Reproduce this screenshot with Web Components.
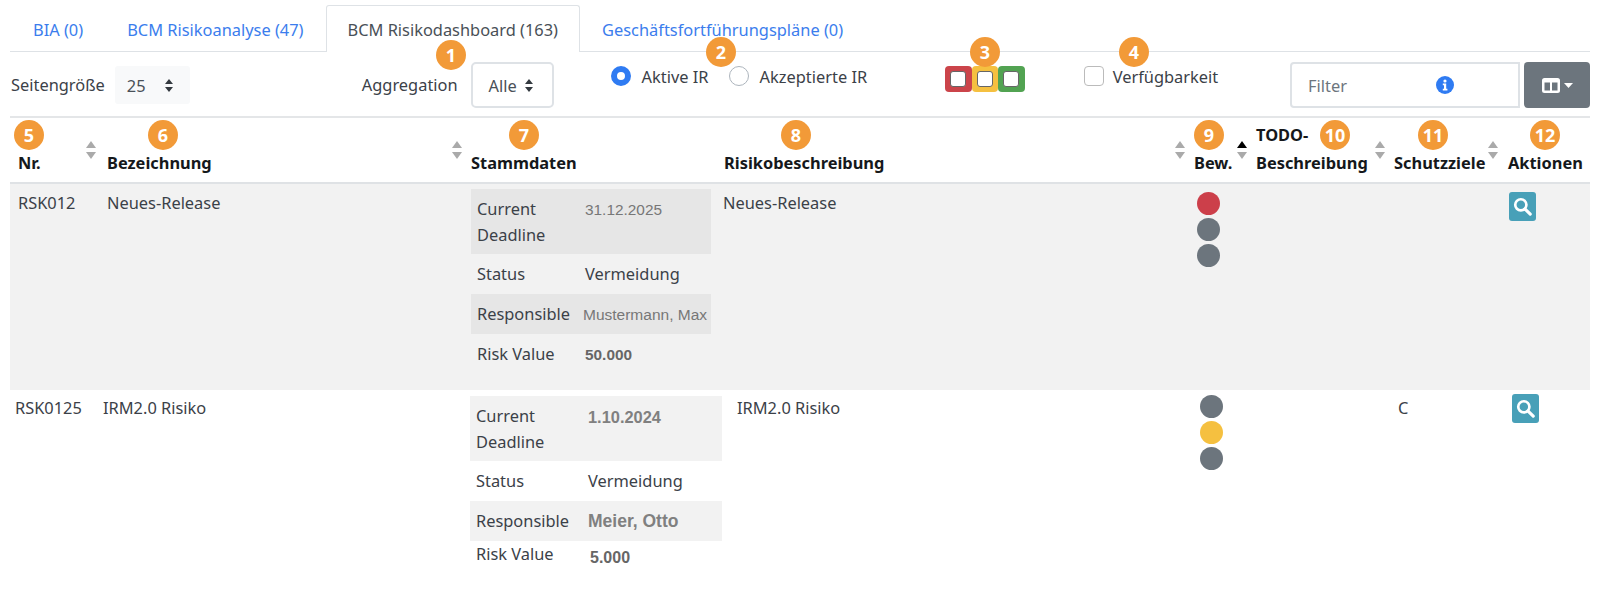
<!DOCTYPE html>
<html lang="de">
<head>
<meta charset="utf-8">
<title>BCM Risikodashboard</title>
<style>
  html, body { margin: 0; height: 596px; overflow: hidden; background: #fff; }
  body { font-family: "Noto Sans", "Open Sans", sans-serif; font-size: 16.4px; color: #3b4148; }
</style>
</head>
<body>
<risk-dashboard>
  <tab-bar>
    <tab-item>BIA (0)</tab-item>
    <tab-item>BCM Risikoanalyse (47)</tab-item>
    <tab-item active>BCM Risikodashboard (163)</tab-item>
    <tab-item>Geschäftsfortführungspläne (0)</tab-item>
  </tab-bar>
  <risk-toolbar></risk-toolbar>
  <risk-header></risk-header>
  <risk-row code="RSK012" name="Neues-Release" desc="Neues-Release" lights="r,g,g" shade style="--cols:90px 371px 252px 474px 62px 138px 112px 1fr;--h:206px;--code-top:8px;--code-left:8px;--kv-top:5px;--kv-width:240px;--desc-left:0px;--light-top:8px;--btn-top:8px">
    <kv-table slot="data" style="--bg:#e6e6e6;--lh:26px;--label-col:108px">
      <kv-row shade tall label="Current Deadline"><span class="v" style="font:15.4px 'Liberation Sans',sans-serif;color:#777;padding-top:5px;display:block">31.12.2025</span></kv-row>
      <kv-row label="Status"><span>Vermeidung</span></kv-row>
      <kv-row shade label="Responsible"><span style="font:15.5px 'Liberation Sans',sans-serif;color:#777;margin-left:-2px;white-space:nowrap">Mustermann, Max</span></kv-row>
      <kv-row label="Risk Value"><span style="font:bold 15.4px 'Liberation Sans',sans-serif;color:#666">50.000</span></kv-row>
    </kv-table>
  </risk-row>
  <risk-row code="RSK0125" name="IRM2.0 Risiko" desc="IRM2.0 Risiko" protect="C" lights="g,y,g" style="--cols:86px 374px 260px 470px 62px 136px 114px 1fr;--h:206px;--code-top:7px;--code-left:5px;--kv-top:6px;--kv-width:252px;--desc-left:7px;--light-top:5px;--btn-top:4px">
    <kv-table slot="data" style="--bg:#f2f2f2;--lh:26px;--label-col:112px">
      <kv-row shade tall label="Current Deadline"><span style="font:bold 16.4px 'Liberation Sans',sans-serif;color:#808080;padding-top:5px;display:block">1.10.2024</span></kv-row>
      <kv-row label="Status"><span>Vermeidung</span></kv-row>
      <kv-row shade label="Responsible"><span style="font:bold 17.5px 'Liberation Sans',sans-serif;color:#808080">Meier, Otto</span></kv-row>
      <kv-row short label="Risk Value"><span style="font:bold 16px 'Liberation Sans',sans-serif;color:#666;padding:8px 0 0 2px;display:block">5.000</span></kv-row>
    </kv-table>
  </risk-row>

  <step-badge slot="badges" n="1" x="451" y="55"></step-badge>
  <step-badge slot="badges" n="2" x="721" y="52"></step-badge>
  <step-badge slot="badges" n="3" x="985" y="52"></step-badge>
  <step-badge slot="badges" n="4" x="1134" y="52"></step-badge>
  <step-badge slot="badges" n="5" x="29" y="135"></step-badge>
  <step-badge slot="badges" n="6" x="163" y="135"></step-badge>
  <step-badge slot="badges" n="7" x="524" y="135"></step-badge>
  <step-badge slot="badges" n="8" x="796" y="135"></step-badge>
  <step-badge slot="badges" n="9" x="1209" y="135"></step-badge>
  <step-badge slot="badges" n="10" x="1335" y="135"></step-badge>
  <step-badge slot="badges" n="11" x="1433" y="135"></step-badge>
  <step-badge slot="badges" n="12" x="1545" y="135"></step-badge>
</risk-dashboard>

<script>
const SORT_ICON = (active) => `<svg width="12" height="20" viewBox="0 0 12 20"><path d="M6 1l5 7H1z" fill="${active ? '#000' : '#aaa'}"/><path d="M6 19l5-7H1z" fill="#aaa"/></svg>`;
const UPDOWN_ICON = `<svg width="10" height="15" viewBox="0 0 10 15"><path d="M5 1l4 5H1zM5 14l4-5H1z" fill="#343a40"/></svg>`;

const template_dashboard = document.createElement('template');
template_dashboard.innerHTML = `
<style>
  :host { display: block; position: relative; height: 596px; padding: 5px 10px 0; box-sizing: border-box; overflow: hidden; }
</style>
<slot></slot>
<slot name="badges"></slot>
`;

class RiskDashboard extends HTMLElement {
  constructor() {
    super();
    this.attachShadow({mode: 'open'});
    this.shadowRoot.appendChild(template_dashboard.content.cloneNode(true));
  }
}

class TabBar extends HTMLElement {
  constructor() {
    super();
    this.attachShadow({mode: 'open'}).innerHTML = `
      <style>
        :host { display: flex; height: 47px; border-bottom: 1px solid #dee2e6; box-sizing: border-box; padding-left: 1px; }
      </style>
      <slot></slot>`;
  }
}

class TabItem extends HTMLElement {
  constructor() {
    super();
    this.attachShadow({mode: 'open'}).innerHTML = `
      <style>
        :host { display: block; height: 47px; box-sizing: border-box; padding: 0 21px; line-height: 47px; color: #3b7ded; border: 1px solid transparent; border-bottom: 0; white-space: nowrap; }
        :host([active]) { color: #495057; background: #fff; border-color: #dee2e6; border-bottom: 0; border-radius: 3px 3px 0 0; }
      </style>
      <slot></slot>`;
  }
}

class RiskToolbar extends HTMLElement {
  constructor() {
    super();
    this.attachShadow({mode: 'open'}).innerHTML = `
      <style>
        :host { display: flex; align-items: flex-start; height: 66px; box-sizing: border-box; border-bottom: 2px solid #e4e6e8; padding: 10px 0 0 1px; }
        .label { line-height: 46px; height: 46px; white-space: nowrap; }
        .page-select { display: flex; align-items: center; justify-content: space-between; width: 75px; height: 38px; margin: 4px 0 0 10px; padding: 0 16px 0 12px; box-sizing: border-box; background: #f8f9fa; border-radius: 3px; color: #495057; }
        .agg { margin-left: 172px; }
        .agg-select { display: flex; align-items: center; gap: 7px; width: 83px; height: 46px; margin-left: 13px; padding-left: 16px; box-sizing: border-box; border: 2px solid #dee2e6; border-radius: 5px; color: #495057; }
        .radios { display: flex; align-items: center; height: 28px; margin-left: 57px; }
        .radio { width: 20px; height: 20px; border-radius: 50%; border: 1px solid #adb5bd; box-sizing: border-box; background: #fff; }
        .radio.on { border: 6px solid #2f7bf2; }
        .radios span { margin-left: 11px; }
        .check-group { display: flex; margin: 4px 0 0 78px; }
        .swatch { width: 26.5px; height: 26px; display: flex; align-items: center; justify-content: center; border-radius: 4px; }
        .swatch i { display: block; width: 16px; height: 16px; background: #fff; border: 1.5px solid #666; border-radius: 3px; box-sizing: border-box; }
        .avail { display: flex; align-items: center; height: 28px; margin-left: 59px; }
        .avail i { display: block; width: 20px; height: 20px; border: 1.5px solid #bbb; border-radius: 4px; box-sizing: border-box; }
        .avail span { margin-left: 9px; }
        .filter { display: flex; align-items: center; width: 230px; height: 46px; margin-left: auto; padding-left: 16px; box-sizing: border-box; border: 2px solid #dee2e6; border-radius: 4px 0 0 4px; color: #6c757d; position: relative; }
        .filter svg { position: absolute; left: 144px; top: 12px; }
        .columns { display: flex; align-items: center; justify-content: center; gap: 4px; width: 66px; height: 46px; margin-left: 4px; background: #6c757d; border-radius: 4px; }
      </style>
      <div class="label">Seitengröße</div>
      <div class="page-select">25 ${UPDOWN_ICON}</div>
      <div class="label agg">Aggregation</div>
      <div class="agg-select">Alle ${UPDOWN_ICON}</div>
      <div class="radios">
        <div class="radio on"></div><span>Aktive IR</span>
        <div class="radio" style="margin-left:20px"></div><span>Akzeptierte IR</span>
      </div>
      <div class="check-group">
        <div class="swatch" style="background:#cb444a"><i></i></div>
        <div class="swatch" style="background:#f5c040"><i></i></div>
        <div class="swatch" style="background:#52a352"><i></i></div>
      </div>
      <div class="avail"><i></i><span>Verfügbarkeit</span></div>
      <div class="filter">Filter
        <svg width="18" height="18" viewBox="0 0 18 18"><circle cx="9" cy="9" r="9" fill="#2f7bf2"/><circle cx="9" cy="5" r="1.6" fill="#fff"/><path d="M6.8 7.6h3.4v5.2h1.2v1.6H6.8v-1.6H8V9.2H6.8z" fill="#fff"/></svg>
      </div>
      <div class="columns">
        <svg width="18" height="15" viewBox="0 0 18 15"><rect width="18" height="15" rx="2.5" fill="#fff"/><rect x="2.5" y="4.5" width="5.5" height="8" fill="#6c757d"/><rect x="10" y="4.5" width="5.5" height="8" fill="#6c757d"/></svg>
        <svg width="9" height="5" viewBox="0 0 9 5"><path d="M0 0h9L4.5 5z" fill="#fff"/></svg>
      </div>`;
  }
}

class RiskHeader extends HTMLElement {
  constructor() {
    super();
    const cols = [
      ['Nr.', 90, 8],
      ['Bezeichnung', 366, 7],
      ['Stammdaten', 252, 5],
      ['Risikobeschreibung', 471, 6],
      ['Bew.', 62, 5],
      ['TODO-<br>Beschreibung', 138, 5],
      ['Schutzziele', 113, 5],
      ['Aktionen', 0, 6]
    ];
    const cells = cols.map((c, i) => `<div class="cell" style="${c[1] ? 'width:' + c[1] + 'px' : 'flex:1'};padding-left:${c[2]}px">
        <span class="title">${c[0]}</span>
        ${i === 2 || i === 7 ? '' : `<span class="sort">${SORT_ICON(i === 4)}</span>`}
      </div>`).join('');
    this.attachShadow({mode: 'open'}).innerHTML = `
      <style>
        :host { display: flex; height: 66px; box-sizing: border-box; border-bottom: 2px solid #dfe2e5; }
        .cell { position: relative; box-sizing: border-box; display: flex; align-items: flex-end; padding-bottom: 5px; }
        .title { font-weight: 700; font-size: 16.4px; line-height: 28px; color: #15181b; white-space: nowrap; }
        .sort { position: absolute; right: 3px; top: 22px; line-height: 0; }
      </style>
      ${cells}`;
  }
}

class RiskRow extends HTMLElement {
  constructor() {
    super();
    const colors = {r: '#cc3f4a', g: '#6c757d', y: '#f5c040'};
    const lights = (this.getAttribute('lights') || '').split(',')
      .map(k => `<i style="background:${colors[k]}"></i>`).join('');
    this.attachShadow({mode: 'open'}).innerHTML = `
      <style>
        :host { display: grid; grid-template-columns: var(--cols); height: var(--h); line-height: 22px; color: #3b4148; }
        :host([shade]) { background: #f2f2f2; }
        .code { padding: var(--code-top) 0 0 var(--code-left); }
        .name { padding: var(--code-top) 0 0 7px; }
        .data { padding-top: var(--kv-top); }
        ::slotted(kv-table) { width: var(--kv-width); }
        .desc { padding: var(--code-top) 0 0 var(--desc-left); }
        .lights { display: flex; flex-direction: column; gap: 3px; padding-top: var(--light-top); }
        .lights i { display: block; width: 23px; height: 23px; border-radius: 50%; }
        .protect { padding-top: var(--code-top); }
        .action { padding-top: var(--btn-top); }
        .btn { display: flex; align-items: center; justify-content: center; width: 27px; height: 29px; background: #48a0b8; border-radius: 3px; }
      </style>
      <div class="code">${this.getAttribute('code')}</div>
      <div class="name">${this.getAttribute('name')}</div>
      <div class="data"><slot name="data"></slot></div>
      <div class="desc">${this.getAttribute('desc')}</div>
      <div class="lights">${lights}</div>
      <div></div>
      <div class="protect">${this.getAttribute('protect') || ''}</div>
      <div class="action"><div class="btn">
        <svg width="19" height="19" viewBox="0 0 17 17"><circle cx="7" cy="7" r="5" fill="none" stroke="#fff" stroke-width="2.4"/><path d="M10.8 10.8l4.6 4.6" stroke="#fff" stroke-width="2.8" stroke-linecap="round"/></svg>
      </div></div>`;
  }
}

class KvTable extends HTMLElement {
  constructor() {
    super();
    this.attachShadow({mode: 'open'}).innerHTML = `
      <style>:host { display: block; }</style>
      <slot></slot>`;
  }
}

class KvRow extends HTMLElement {
  constructor() {
    super();
    this.attachShadow({mode: 'open'}).innerHTML = `
      <style>
        :host { display: grid; grid-template-columns: var(--label-col) 1fr; align-items: center; height: 40px; padding-left: 6px; box-sizing: border-box; white-space: nowrap; }
        :host([shade]) { background: var(--bg); }
        :host([tall]) { height: 65px; align-items: start; padding-top: 7px; }
        :host([short]) { height: 30px; align-items: start; }
        .label { line-height: var(--lh); white-space: normal; }
      </style>
      <div class="label">${this.getAttribute('label')}</div>
      <div><slot></slot></div>`;
  }
}

class StepBadge extends HTMLElement {
  constructor() {
    super();
    const size = 30;
    const x = +this.getAttribute('x') - size / 2;
    const y = +this.getAttribute('y') - size / 2;
    this.attachShadow({mode: 'open'}).innerHTML = `
      <style>
        :host { position: absolute; left: ${x}px; top: ${y}px; width: ${size}px; height: ${size}px; display: flex; align-items: center; justify-content: center; border-radius: 50%; background: #f29a38; color: #fff; font: 700 18px/1 "Noto Sans", sans-serif; }
      </style>
      ${this.getAttribute('n')}`;
  }
}

window.customElements.define('risk-dashboard', RiskDashboard);
window.customElements.define('tab-bar', TabBar);
window.customElements.define('tab-item', TabItem);
window.customElements.define('risk-toolbar', RiskToolbar);
window.customElements.define('risk-header', RiskHeader);
window.customElements.define('risk-row', RiskRow);
window.customElements.define('kv-table', KvTable);
window.customElements.define('kv-row', KvRow);
window.customElements.define('step-badge', StepBadge);
</script>
</body>
</html>
